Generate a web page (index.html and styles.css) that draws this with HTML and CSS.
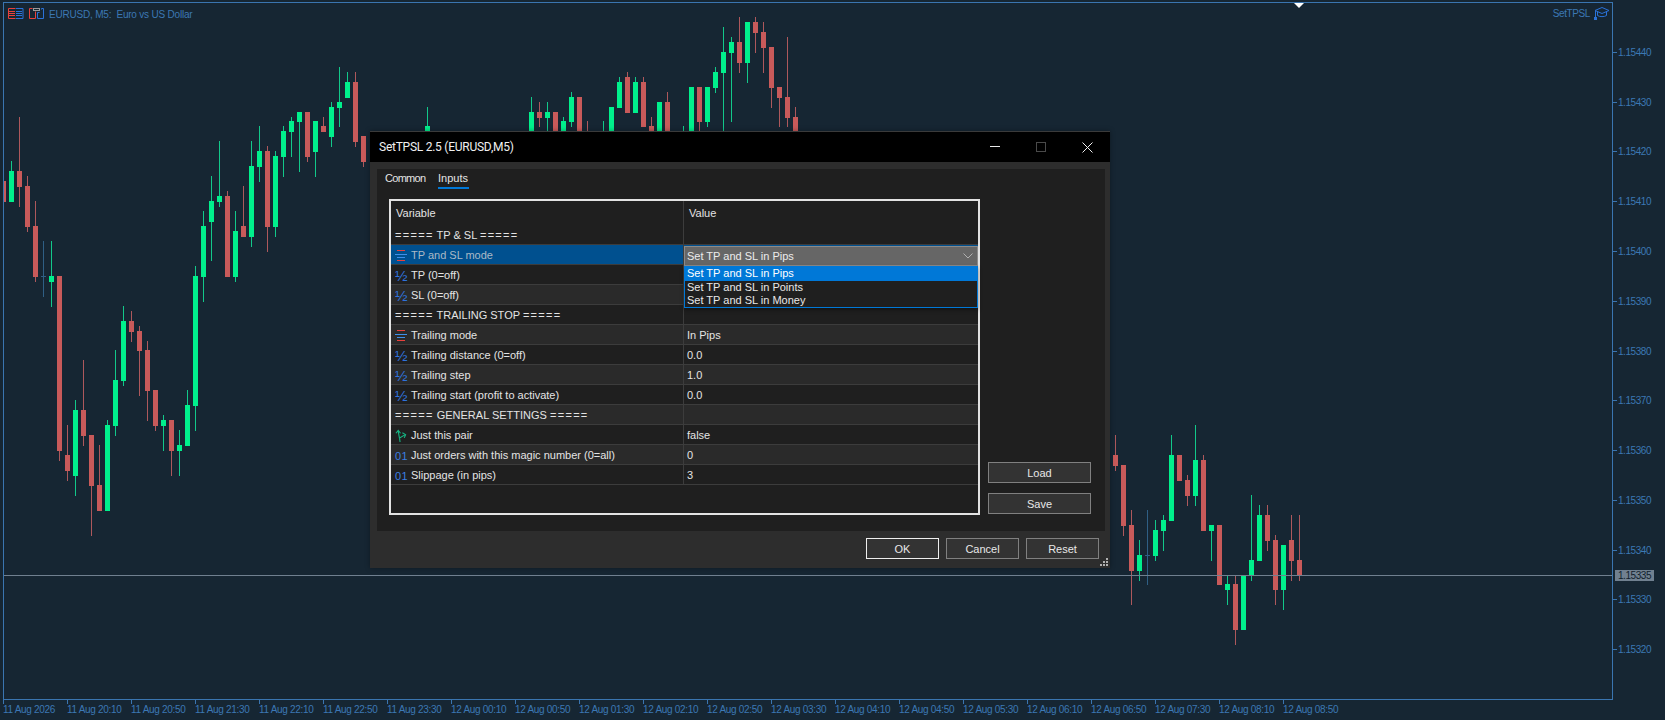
FILE: index.html
```html
<!DOCTYPE html>
<html lang="en">
<head>
    <meta charset="UTF-8">
    <meta name="viewport" content="width=device-width, initial-scale=1.0">
    <title>EURUSD, M5 - SetTPSL</title>
    <link rel="stylesheet" href="styles.css">
</head>
<body>
    <div class="terminal">
        <svg id="chart" class="chart" width="1665" height="720" viewBox="0 0 1665 720"></svg>

        <div class="chart-head">
            <svg class="head-icon" width="16" height="12" viewBox="0 0 16 12">
                <path d="M7.5.5H.5v10h7M1 3.5h6M1 5.5h6M1 7.5h6" fill="none" stroke="#e8413c"/>
                <path d="M8 .5h7v10H8M8 3.5h6M8 5.5h6M8 7.5h6" fill="none" stroke="#2a72d8"/>
            </svg>
            <svg class="head-icon" width="16" height="12" viewBox="0 0 16 12">
                <path d="M6.5 3.5v7h-6V.5h3" fill="none" stroke="#e8413c"/>
                <path d="M8.5 10.5v-6h2m2-3v-1h2v10h-6" fill="none" stroke="#2a72d8"/>
                <rect x="4.5" y="0.5" width="6" height="2" fill="none" stroke="#9a9a9a"/>
            </svg>
            <span class="head-title">EURUSD, M5:&nbsp; Euro vs US Dollar</span>
        </div>

        <div class="expert-tag">
            <span>SetTPSL</span>
            <svg width="16" height="13" viewBox="0 0 16 13">
                <path d="M8 .5l7 3-7 3-7-3zM3.5 5v3.5c2 1.500 7 1.500 9 0V5M1.500 4v6" fill="none" stroke="#2a72d8"/>
                <rect x="0" y="10" width="3" height="3" fill="#2a72d8"/>
            </svg>
        </div>

        <div class="dialog">
            <div class="titlebar">
                <span class="titlebar-text">SetTPSL 2.5 (EURUSD,M5)</span>
                <div class="win-buttons">
                    <div class="win-btn"><svg width="10" height="10" viewBox="0 0 10 10"><path d="M0 4.500h10" stroke="#e8e8e8"/></svg></div>
                    <div class="win-btn"><svg width="10" height="10" viewBox="0 0 10 10"><rect x=".5" y=".5" width="9" height="9" fill="none" stroke="#4a4a4a"/></svg></div>
                    <div class="win-btn"><svg width="11" height="11" viewBox="0 0 11 11"><path d="M.5.5l10 10M10.500.5l-10 10" stroke="#f0f0f0" fill="none"/></svg></div>
                </div>
            </div>

            <div class="panel">
                <div class="tabs">
                    <div class="tab tab-common">Common</div>
                    <div class="tab tab-active">Inputs</div>
                </div>
                <div class="panel-main">
                    <div class="inputs">
                        <div class="inputs-head">
                            <div class="cell-var">Variable</div>
                            <div class="cell-val">Value</div>
                        </div>

                        <div class="row">
                            <div class="cell-var"><span><span class="eq">=====</span> TP &amp; SL <span class="eq">=====</span></span></div>
                            <div class="cell-val"></div>
                        </div>
                        <div class="row row-selected">
                            <div class="cell-var">
                                <svg class="ico" width="12" height="12" viewBox="0 0 12 12"><path d="M2 .5h8M2 10.500h8" stroke="#e8413c"/><path d="M0 4.500h12M2 7.500h8" stroke="#3f8fe8" fill="none"/></svg>
                                <span>TP and SL mode</span>
                            </div>
                            <div class="cell-val">
                                <div class="combo">
                                    <span>Set TP and SL in Pips</span>
                                    <svg width="10" height="6" viewBox="0 0 10 6"><path d="M.5.500l4.500 4.500 4.500-4.500" fill="none" stroke="#b0b0b0"/></svg>
                                </div>
                                <div class="combo-list">
                                    <div class="combo-item combo-item-active">Set TP and SL in Pips</div>
                                    <div class="combo-item">Set TP and SL in Points</div>
                                    <div class="combo-item">Set TP and SL in Money</div>
                                </div>
                            </div>
                        </div>
                        <div class="row">
                            <div class="cell-var"><span class="ico ico-half">½</span><span>TP (0=off)</span></div>
                            <div class="cell-val"></div>
                        </div>
                        <div class="row row-alt">
                            <div class="cell-var"><span class="ico ico-half">½</span><span>SL (0=off)</span></div>
                            <div class="cell-val"></div>
                        </div>
                        <div class="row">
                            <div class="cell-var"><span><span class="eq">=====</span> TRAILING STOP <span class="eq">=====</span></span></div>
                            <div class="cell-val"></div>
                        </div>
                        <div class="row row-alt">
                            <div class="cell-var">
                                <svg class="ico" width="12" height="12" viewBox="0 0 12 12"><path d="M2 .5h8M2 10.500h8" stroke="#e8413c"/><path d="M0 4.500h12M2 7.500h8" stroke="#3f8fe8" fill="none"/></svg>
                                <span>Trailing mode</span>
                            </div>
                            <div class="cell-val">In Pips</div>
                        </div>
                        <div class="row">
                            <div class="cell-var"><span class="ico ico-half">½</span><span>Trailing distance (0=off)</span></div>
                            <div class="cell-val">0.0</div>
                        </div>
                        <div class="row row-alt">
                            <div class="cell-var"><span class="ico ico-half">½</span><span>Trailing step</span></div>
                            <div class="cell-val">1.0</div>
                        </div>
                        <div class="row">
                            <div class="cell-var"><span class="ico ico-half">½</span><span>Trailing start (profit to activate)</span></div>
                            <div class="cell-val">0.0</div>
                        </div>
                        <div class="row row-alt">
                            <div class="cell-var"><span><span class="eq">=====</span> GENERAL SETTINGS <span class="eq">=====</span></span></div>
                            <div class="cell-val"></div>
                        </div>
                        <div class="row">
                            <div class="cell-var">
                                <svg class="ico" width="13" height="14" viewBox="0 0 13 14"><path d="M5.500 13.500C5 9 4 6 3.500 1.500M1 4l2.500-3L6 4M4.500 9.500L11 5.500M8 3.500l3.500 2-1.500 3.500" fill="none" stroke="#16b583" stroke-width="1.200"/></svg>
                                <span>Just this pair</span>
                            </div>
                            <div class="cell-val">false</div>
                        </div>
                        <div class="row row-alt">
                            <div class="cell-var"><span class="ico ico-int">01</span><span>Just orders with this magic number (0=all)</span></div>
                            <div class="cell-val">0</div>
                        </div>
                        <div class="row">
                            <div class="cell-var"><span class="ico ico-int">01</span><span>Slippage (in pips)</span></div>
                            <div class="cell-val">3</div>
                        </div>
                    </div>
                    <div class="side-buttons">
                        <button class="btn btn-side">Load</button>
                        <button class="btn btn-side">Save</button>
                    </div>
                </div>
            </div>

            <div class="footer">
                <button class="btn btn-foot btn-default">OK</button>
                <button class="btn btn-foot">Cancel</button>
                <button class="btn btn-foot">Reset</button>
            </div>
            <svg class="grip" width="8" height="8" viewBox="0 0 8 8">
                <path d="M6 0h2v2H6zM3 3h2v2H3zM6 3h2v2H6zM0 6h2v2H0zM3 6h2v2H3zM6 6h2v2H6z" fill="#b0b0b0"/>
            </svg>
        </div>
    </div>
    <script src="script.js"></script>
</body>
</html>
```

FILE: styles.css
```css
body {
    margin: 0;
    background-color: #162633;
    font-family: "Liberation Sans", Arial, sans-serif;
    font-size: 11px;
    color: #e4e4e4;
    overflow: hidden;
}
.terminal {
    position: relative;
    width: 1665px;
    height: 720px;
}
.chart {
    display: block;
}
.axis-text {
    font-family: "Liberation Sans", Arial, sans-serif;
    font-size: 10px;
    letter-spacing: -0.45px;
    fill: #3c78b4;
}
.time-text {
    font-family: "Liberation Sans", Arial, sans-serif;
    font-size: 10px;
    letter-spacing: -0.3px;
    fill: #3c78b4;
}
.price-tag-text {
    font-family: "Liberation Sans", Arial, sans-serif;
    font-size: 10px;
    letter-spacing: -0.45px;
    fill: #10202c;
}

/* chart captions */
.chart-head {
    position: absolute;
    left: 8px;
    top: 8px;
    display: flex;
    align-items: center;
    gap: 5px;
    height: 12px;
    color: #3c78b4;
}
.head-title {
    margin-left: -1px;
    font-size: 10px;
    letter-spacing: -0.2px;
}
.expert-tag {
    position: absolute;
    right: 55px;
    top: 7px;
    display: flex;
    align-items: center;
    gap: 4px;
    font-size: 10px;
    letter-spacing: -0.4px;
    color: #3c78b4;
}

/* dialog */
.dialog {
    position: absolute;
    left: 370px;
    top: 131px;
    width: 740px;
    height: 437px;
    display: flex;
    flex-direction: column;
    background-color: #2d2d2d;
    border-top: 1px solid #3a3a3a;
    box-sizing: border-box;
    box-shadow: 0 0 5px rgba(0, 0, 0, 0.35);
}
.titlebar {
    display: flex;
    align-items: center;
    justify-content: space-between;
    height: 30px;
    flex-shrink: 0;
    background-color: #000;
    color: #f0f0f0;
    font-family: Roboto, "Liberation Sans", sans-serif;
    font-size: 12px;
    letter-spacing: -0.25px;
}
.titlebar-text {
    padding-left: 9px;
}
.win-buttons {
    display: flex;
}
.win-btn {
    display: flex;
    align-items: center;
    justify-content: center;
    width: 46px;
    height: 30px;
}
.panel {
    display: flex;
    flex-direction: column;
    height: 362px;
    margin: 7px 5px 0 7px;
    padding: 0 12px 16px;
    box-sizing: border-box;
    background-color: #1f1f1f;
}
.tabs {
    display: flex;
    gap: 13px;
    height: 20px;
    margin-left: -4px;
    margin-bottom: 10px;
    flex-shrink: 0;
}
.tab {
    line-height: 18px;
    height: 20px;
    box-sizing: border-box;
}
.tab-common {
    width: 40px;
    letter-spacing: -0.7px;
}
.tab-active {
    width: 31px;
    border-bottom: 2px solid #0078d7;
}
.panel-main {
    display: flex;
    flex: 1;
    min-height: 0;
}

/* inputs table */
.inputs {
    width: 591px;
    border: 2px solid #e2e2e2;
    box-sizing: border-box;
}
.inputs-head {
    display: flex;
    height: 24px;
    line-height: 24px;
}
.row {
    display: flex;
    height: 20px;
    line-height: 21px;
    box-sizing: border-box;
    border-bottom: 1px solid #3c3c3c;
}
.row-alt {
    background-color: #2a2a2a;
}
.row-selected {
    background-color: #00508f;
    color: #aab9c6;
}
.cell-var {
    display: flex;
    align-items: center;
    width: 293px;
    box-sizing: border-box;
    padding-left: 4px;
    border-right: 1px solid #3c3c3c;
    white-space: pre;
}
.cell-val {
    position: relative;
    flex: 1;
    padding-left: 5px;
}
.inputs-head .cell-var {
    padding-left: 5px;
}
.row .cell-var {
    padding-top: 2px;
}
.row .cell-val {
    padding-left: 3px;
}
.eq {
    letter-spacing: 1.3px;
}
.ico {
    flex-shrink: 0;
    width: 12px;
    margin-right: 4px;
    display: block;
}
.ico-half {
    font-size: 15px;
    line-height: 14px;
    color: #2f72dc;
}
.ico-int {
    font-size: 11px;
    line-height: 14px;
    letter-spacing: 0.3px;
    color: #3a7ee0;
}

/* open combo box */
.combo {
    position: absolute;
    left: 0;
    top: 1px;
    width: 294px;
    height: 20px;
    box-sizing: border-box;
    display: flex;
    align-items: center;
    justify-content: space-between;
    padding: 0 4px 0 2px;
    line-height: 18px;
    background-color: #666;
    border: 1px solid #8a8a8a;
    color: #ececec;
}
.combo-list {
    position: absolute;
    left: 0;
    top: 21px;
    width: 294px;
    box-sizing: border-box;
    background-color: #1f1f1f;
    border: 1px solid #0078d7;
    color: #e8e8e8;
    box-shadow: 0 2px 4px rgba(0, 0, 0, 0.4);
    z-index: 2;
}
.combo-item {
    height: 13px;
    line-height: 12px;
    padding-left: 2px;
}
.combo-item-active {
    height: 14px;
    line-height: 13px;
    background-color: #0078d7;
    color: #fff;
}

/* buttons */
.btn {
    display: block;
    padding: 0;
    font-family: "Liberation Sans", Arial, sans-serif;
    font-size: 11px;
    color: #e8e8e8;
    background-color: #333;
    border: 1px solid #808080;
    box-sizing: border-box;
}
.side-buttons {
    display: flex;
    flex-direction: column;
    justify-content: flex-end;
    gap: 10px;
    margin-left: 8px;
    padding-bottom: 1px;
}
.btn-side {
    width: 103px;
    height: 21px;
}
.footer {
    display: flex;
    justify-content: flex-end;
    gap: 7px;
    padding: 7px 11px 0 0;
}
.btn-foot {
    width: 73px;
    height: 21px;
}
.btn-default {
    border-color: #eee;
}
.grip {
    position: absolute;
    right: 2px;
    bottom: 2px;
}
```

FILE: script.js
```js
const svg = document.getElementById('chart');
const NS = 'http://www.w3.org/2000/svg';

const AXIS = '#3a75b0';
const GREEN_BODY = '#00f08c';
const GREEN_WICK = '#12c88a';
const RED_BODY = '#c85a5a';
const RED_WICK = '#ad585c';
const DOJI = '#2f5f85';

// x of the wick, colour, wick top, body top, body bottom, wick bottom
const candles = [
    [3, 'r', 181, 181, 202, 202], [11, 'g', 161, 171, 202, 202], [19, 'r', 117, 171, 187, 207],
    [27, 'r', 176, 186, 227, 232], [35, 'r', 201, 226, 277, 282], [51, 'g', 241, 276, 282, 307],
    [59, 'r', 276, 276, 451, 461], [67, 'r', 425, 455, 471, 481], [75, 'g', 400, 410, 476, 496],
    [83, 'r', 360, 410, 436, 446], [91, 'r', 435, 435, 486, 536], [99, 'r', 445, 485, 511, 511],
    [107, 'g', 420, 425, 511, 511], [115, 'g', 350, 380, 426, 436], [123, 'g', 306, 321, 381, 386],
    [131, 'r', 311, 321, 332, 342], [139, 'r', 326, 331, 351, 396], [147, 'r', 341, 350, 391, 421],
    [155, 'r', 390, 390, 426, 431], [163, 'g', 415, 420, 426, 451], [171, 'r', 420, 420, 451, 476],
    [179, 'g', 430, 445, 451, 476], [187, 'g', 390, 405, 446, 446], [195, 'g', 266, 276, 406, 431],
    [203, 'g', 211, 226, 277, 302], [211, 'g', 176, 201, 222, 261], [219, 'g', 141, 196, 202, 207],
    [227, 'r', 191, 196, 277, 277], [235, 'g', 211, 231, 277, 282], [243, 'r', 186, 226, 237, 237],
    [251, 'g', 141, 166, 237, 247], [259, 'g', 126, 151, 167, 182], [267, 'r', 146, 151, 227, 252],
    [275, 'g', 151, 156, 227, 237], [283, 'g', 126, 131, 157, 177], [291, 'g', 117, 121, 132, 157],
    [299, 'g', 112, 112, 122, 172], [307, 'r', 112, 112, 157, 162], [315, 'g', 121, 121, 152, 177],
    [323, 'r', 117, 126, 132, 132], [331, 'g', 102, 107, 137, 147], [339, 'g', 67, 102, 108, 127],
    [347, 'g', 72, 82, 98, 98], [355, 'r', 72, 82, 142, 147], [363, 'r', 136, 136, 162, 167],
    [427, 'g', 107, 126, 132, 132],
    [531, 'g', 97, 112, 132, 132], [539, 'r', 102, 112, 118, 127], [547, 'g', 102, 112, 118, 132],
    [555, 'r', 112, 112, 132, 132], [563, 'g', 117, 121, 132, 132], [571, 'g', 92, 97, 122, 127],
    [579, 'r', 97, 97, 132, 132], [587, 'r', 121, 132, 132, 132], [603, 'g', 121, 132, 132, 132],
    [611, 'g', 107, 107, 132, 132], [619, 'g', 77, 82, 108, 108], [627, 'r', 72, 77, 113, 113],
    [635, 'g', 77, 82, 113, 113], [643, 'r', 77, 82, 127, 127], [651, 'r', 117, 126, 132, 132],
    [659, 'g', 102, 102, 132, 132], [667, 'r', 92, 102, 132, 132], [683, 'g', 126, 132, 132, 132],
    [691, 'g', 87, 87, 132, 132], [699, 'r', 87, 87, 122, 132], [707, 'g', 87, 87, 122, 127],
    [715, 'g', 67, 72, 88, 93], [723, 'g', 27, 52, 73, 132], [731, 'g', 37, 42, 53, 122],
    [739, 'r', 17, 42, 63, 73], [747, 'g', 22, 22, 63, 83], [755, 'r', 17, 22, 33, 53],
    [763, 'r', 22, 32, 48, 73], [771, 'r', 47, 47, 88, 108], [779, 'r', 87, 87, 98, 127],
    [787, 'r', 37, 97, 118, 127], [795, 'r', 107, 117, 132, 132],
    [1115, 'r', 435, 455, 466, 471], [1123, 'r', 465, 465, 526, 536], [1131, 'r', 510, 525, 571, 605],
    [1139, 'g', 540, 555, 571, 581], [1155, 'g', 520, 530, 556, 561], [1163, 'g', 515, 520, 531, 551],
    [1171, 'g', 435, 455, 521, 521], [1179, 'r', 455, 455, 481, 481], [1187, 'r', 475, 480, 496, 506],
    [1195, 'g', 425, 460, 496, 506], [1203, 'r', 455, 460, 531, 531], [1211, 'g', 525, 525, 531, 561],
    [1219, 'r', 525, 525, 585, 585], [1227, 'g', 575, 584, 590, 605], [1235, 'r', 575, 584, 630, 645],
    [1243, 'g', 575, 575, 630, 630], [1251, 'g', 495, 560, 576, 581], [1259, 'g', 505, 515, 561, 561],
    [1267, 'r', 505, 515, 541, 551], [1275, 'r', 535, 540, 590, 605], [1283, 'g', 545, 545, 590, 610],
    [1291, 'r', 515, 540, 561, 581], [1299, 'r', 515, 560, 576, 581]
];

const prices = [
    ['1.15440', 52], ['1.15430', 102], ['1.15420', 151], ['1.15410', 201], ['1.15400', 251],
    ['1.15390', 301], ['1.15380', 351], ['1.15370', 400], ['1.15360', 450], ['1.15350', 500],
    ['1.15340', 550], ['1.15330', 599], ['1.15320', 649]
];

const times = [
    '11 Aug 2026', '11 Aug 20:10', '11 Aug 20:50', '11 Aug 21:30', '11 Aug 22:10', '11 Aug 22:50',
    '11 Aug 23:30', '12 Aug 00:10', '12 Aug 00:50', '12 Aug 01:30', '12 Aug 02:10', '12 Aug 02:50',
    '12 Aug 03:30', '12 Aug 04:10', '12 Aug 04:50', '12 Aug 05:30', '12 Aug 06:10', '12 Aug 06:50',
    '12 Aug 07:30', '12 Aug 08:10', '12 Aug 08:50'
];

function rect(x, y, w, h, fill) {
    const r = document.createElementNS(NS, 'rect');
    r.setAttribute('x', x);
    r.setAttribute('y', y);
    r.setAttribute('width', w);
    r.setAttribute('height', h);
    r.setAttribute('fill', fill);
    r.setAttribute('shape-rendering', 'crispEdges');
    svg.appendChild(r);
}

function label(x, y, content, className) {
    const t = document.createElementNS(NS, 'text');
    t.setAttribute('x', x);
    t.setAttribute('y', y);
    t.setAttribute('class', className);
    t.textContent = content;
    svg.appendChild(t);
}

candles.forEach(function (c) {
    const isGreen = c[1] === 'g';
    const bodyLeft = Math.max(4, c[0] - 2);
    if (c[5] > c[2]) {
        rect(c[0], c[2], 1, c[5] - c[2], isGreen ? GREEN_WICK : RED_WICK);
    }
    rect(bodyLeft, c[3], c[0] + 3 - bodyLeft, c[4] - c[3], isGreen ? GREEN_BODY : RED_BODY);
});

// the two no-change bars
[[43, 241, 297, 276], [1147, 510, 585, 555]].forEach(function (d) {
    rect(d[0], d[1], 1, d[2] - d[1], DOJI);
    rect(d[0] - 2, d[3], 5, 1, DOJI);
});

// current price line and tag
rect(4, 575, 1608, 1, '#708090');
rect(1615, 570, 39, 11, '#708090');
label(1618, 579, '1.15335', 'price-tag-text');

// frame
rect(3, 2, 1610, 1, AXIS);
rect(3, 699, 1610, 1, AXIS);
rect(3, 2, 1, 698, AXIS);
rect(1612, 2, 1, 698, AXIS);

prices.forEach(function (p) {
    rect(1613, p[1], 4, 1, AXIS);
    label(1618, p[1] + 4, p[0], 'axis-text');
});

times.forEach(function (text, i) {
    const x = 3 + i * 64;
    rect(x, 700, 1, 4, AXIS);
    label(x, 713, text, 'time-text');
});

// shift marker
const marker = document.createElementNS(NS, 'polygon');
marker.setAttribute('points', '1294,3 1304,3 1299,8');
marker.setAttribute('fill', '#fff');
svg.appendChild(marker);
```
